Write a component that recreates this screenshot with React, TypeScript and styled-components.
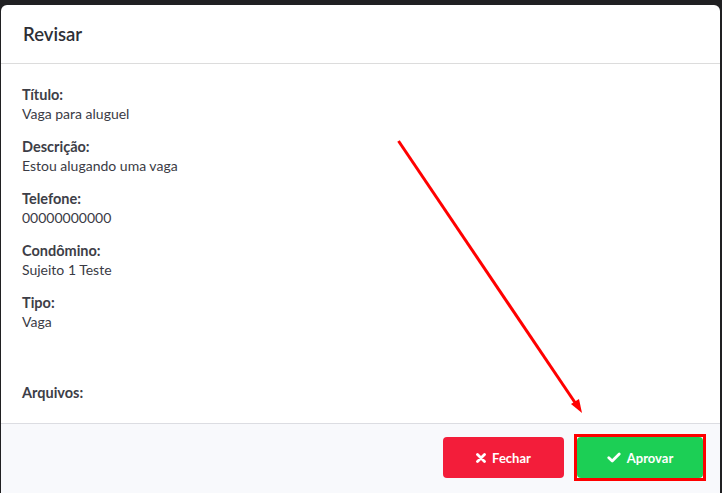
import React from "react";
import styled, { createGlobalStyle } from "styled-components";

const Global = createGlobalStyle`
  html, body { margin: 0; padding: 0; background: #202022; overflow: hidden; }
  body { font-family: Lato, "Liberation Sans", sans-serif; }
  * { box-sizing: border-box; }
`;

const Stage = styled.div`
  position: relative;
  width: 722px;
  height: 493px;
  padding: 5px 2px 0 1px;
  overflow: hidden;
`;

const Modal = styled.div`
  background: #fff;
  border-radius: 6px 6px 0 0;
  height: 520px;
  display: flex;
  flex-direction: column;
`;

const Header = styled.div`
  height: 59px;
  flex-shrink: 0;
  border-bottom: 1px solid #dcdcdc;
  display: flex;
  align-items: center;
  padding: 0 22px 1px;
`;

const Title = styled.h5`
  margin: 0;
  font-size: 18.5px;
  font-weight: 600;
  color: #2e2f36;
`;

const Body = styled.div`
  height: 359px;
  flex-shrink: 0;
  overflow: hidden;
  padding: 21px 21px;
  display: flex;
  flex-direction: column;
`;

const Field = styled.div`
  flex-shrink: 0;
  margin-bottom: 14px;
`;

const Label = styled.div`
  font-size: 14.5px;
  line-height: 19px;
  font-weight: 700;
  color: #3d3e47;
`;

const Value = styled.div`
  font-size: 14px;
  line-height: 19px;
  color: #3a3b45;
`;

const Gallery = styled.div`
  flex-shrink: 0;
  height: 38px;
`;

const Footer = styled.div`
  flex: 1;
  background: #f8f9fc;
  border-top: 1px solid #dcdde2;
  display: flex;
  justify-content: flex-end;
  align-items: flex-start;
  padding: 13px 14px 0 0;
  gap: 10px;
`;

const Button = styled.button<{ $tone: "danger" | "success" }>`
  border: none;
  border-radius: 4px;
  height: 41px;
  background: ${(p) => (p.$tone === "danger" ? "#f31d3a" : "#1ccf55")};
  color: #fff;
  font-family: inherit;
  font-size: 13px;
  font-weight: 700;
  display: flex;
  align-items: center;
  justify-content: center;
  gap: 6px;
  padding: 0;
`;

const Highlight = styled.div`
  border: 3px solid #ff0000;
  margin-top: -3px;
  display: flex;
`;

const ArrowLayer = styled.svg`
  position: absolute;
  left: 0;
  top: 0;
  pointer-events: none;
`;

const XIcon = () => (
  <svg width="10" height="10" viewBox="0 0 10 10">
    <path d="M1.5 1.5 L8.5 8.5 M8.5 1.5 L1.5 8.5" stroke="#fff" strokeWidth="2.8" strokeLinecap="round" />
  </svg>
);

const CheckIcon = () => (
  <svg width="14" height="11" viewBox="0 0 14 11">
    <path d="M1.8 5.8 L5.2 9 L12.2 2" stroke="#fff" strokeWidth="2.8" fill="none" strokeLinecap="round" strokeLinejoin="round" />
  </svg>
);

const fields = [
  ["Título:", "Vaga para aluguel"],
  ["Descrição:", "Estou alugando uma vaga"],
  ["Telefone:", "00000000000"],
  ["Condômino:", "Sujeito 1 Teste"],
  ["Tipo:", "Vaga"],
];

export default function App() {
  return (
    <>
      <Global />
      <Stage>
        <Modal>
          <Header>
            <Title>Revisar</Title>
          </Header>
          <Body>
            {fields.map(([l, v]) => (
              <Field key={l}>
                <Label>{l}</Label>
                <Value>{v}</Value>
              </Field>
            ))}
            <Gallery />
            <Field>
              <Label>Arquivos:</Label>
            </Field>
          </Body>
          <Footer>
            <Button $tone="danger" style={{ width: 121 }}>
              <XIcon />
              Fechar
            </Button>
            <Highlight>
              <Button $tone="success" style={{ width: 126 }}>
                <CheckIcon />
                Aprovar
              </Button>
            </Highlight>
          </Footer>
        </Modal>
        <ArrowLayer width="722" height="493" viewBox="0 0 722 493">
          <line x1="398.5" y1="141" x2="576" y2="404" stroke="#ff0000" strokeWidth="3" />
          <path d="M582 413 L571 404 L579 399 Z" fill="#ff0000" />
        </ArrowLayer>
      </Stage>
    </>
  );
}
